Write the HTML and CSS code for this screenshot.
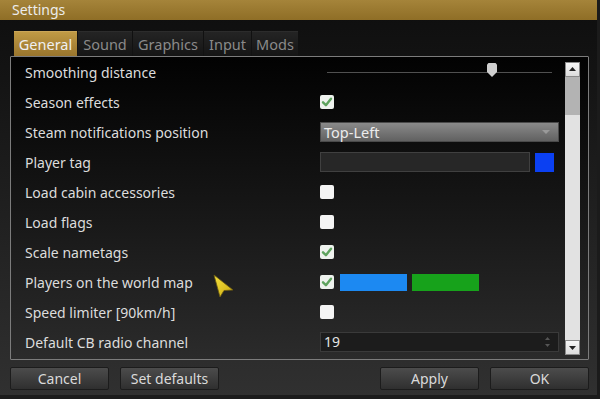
FILE: index.html
```html
<!DOCTYPE html>
<html>
<head>
<meta charset="utf-8">
<link rel="stylesheet" href="styles.css">
</head>
<body>
<div class="window">
  <div class="titlebar">Settings</div>
  <div class="tabs">
    <div class="tab active w-general">General</div>
    <div class="tab w-sound">Sound</div>
    <div class="tab w-graphics">Graphics</div>
    <div class="tab w-input">Input</div>
    <div class="tab w-mods">Mods</div>
  </div>
  <div class="panel">
    <div class="rows">
      <div class="row">
        <span class="label">Smoothing distance</span>
        <div class="slider">
          <div class="slider-line"></div>
          <svg class="slider-thumb" width="10" height="14" viewBox="0 0 10 14"><polygon points="1.5,0 8.5,0 10,1.5 10,9 5,14 0,9 0,1.5" fill="#cfcfcf"/></svg>
        </div>
      </div>
      <div class="row">
        <span class="label">Season effects</span>
        <div class="check on"><svg width="14" height="14" viewBox="0 0 14 14"><path d="M3 7.3 L5.9 10.2 L11 3.8" fill="none" stroke="#5ea35e" stroke-width="2.4" stroke-linejoin="round" stroke-linecap="round"/></svg></div>
      </div>
      <div class="row">
        <span class="label">Steam notifications position</span>
        <div class="dropdown"><span>Top-Left</span><span class="dd-arrow"></span></div>
      </div>
      <div class="row">
        <span class="label">Player tag</span>
        <div class="tagline"><div class="tag-input"></div><div class="swatch blue-sq"></div></div>
      </div>
      <div class="row">
        <span class="label">Load cabin accessories</span>
        <div class="check"></div>
      </div>
      <div class="row">
        <span class="label">Load flags</span>
        <div class="check"></div>
      </div>
      <div class="row">
        <span class="label">Scale nametags</span>
        <div class="check on"><svg width="14" height="14" viewBox="0 0 14 14"><path d="M3 7.3 L5.9 10.2 L11 3.8" fill="none" stroke="#5ea35e" stroke-width="2.4" stroke-linejoin="round" stroke-linecap="round"/></svg></div>
      </div>
      <div class="row">
        <span class="label">Players on the world map</span>
        <div class="mapline">
          <div class="check on"><svg width="14" height="14" viewBox="0 0 14 14"><path d="M3 7.3 L5.9 10.2 L11 3.8" fill="none" stroke="#5ea35e" stroke-width="2.4" stroke-linejoin="round" stroke-linecap="round"/></svg></div>
          <div class="bar bar-blue"></div>
          <div class="bar bar-green"></div>
        </div>
      </div>
      <div class="row">
        <span class="label">Speed limiter [90km/h]</span>
        <div class="check"></div>
      </div>
      <div class="row">
        <span class="label">Default CB radio channel</span>
        <div class="number"><span>19</span>
          <svg class="spin" width="7" height="14" viewBox="0 0 7 14"><polygon points="3.5,2 6,5 1,5" fill="#555"/><polygon points="1,9 6,9 3.5,12" fill="#555"/></svg>
        </div>
      </div>
    </div>
    <div class="scrollbar">
      <div class="sb-btn"><svg width="13" height="13" viewBox="0 0 13 13"><polygon points="6.5,4 10,8 3,8" fill="#222"/></svg></div>
      <div class="sb-thumb"></div>
      <div class="sb-track"></div>
      <div class="sb-btn"><svg width="13" height="13" viewBox="0 0 13 13"><polygon points="3,5 10,5 6.5,9" fill="#222"/></svg></div>
    </div>
  </div>
  <div class="buttons">
    <div class="btn">Cancel</div>
    <div class="btn">Set defaults</div>
    <div class="spacer"></div>
    <div class="btn">Apply</div>
    <div class="btn">OK</div>
  </div>
</div>
<svg class="cursor" width="22" height="24" viewBox="0 0 22 24">
  <defs>
    <linearGradient id="cg" x1="0" y1="0" x2="1" y2="1">
      <stop offset="0" stop-color="#f6e23e"/>
      <stop offset="1" stop-color="#c9a810"/>
    </linearGradient>
  </defs>
  <polygon points="1,1 20,16 11,16.5 7,23" fill="url(#cg)" stroke="#6b5a10" stroke-width="0.8"/>
</svg>
</body>
</html>
```

FILE: styles.css
```css
html, body {
  margin: 0;
  padding: 0;
}
body {
  width: 600px;
  height: 399px;
  overflow: hidden;
  background: #1b1b1b;
  font-family: "Noto Sans", "Open Sans", sans-serif;
  font-size: 14px;
  position: relative;
}
.window {
  width: 597px;
  height: 395px;
  display: flex;
  flex-direction: column;
  background: linear-gradient(#0e0e0e 0%, #141414 20%, #303030 100%);
}
.titlebar {
  height: 20px;
  line-height: 20px;
  padding-left: 12px;
  color: #ececec;
  background: linear-gradient(#a5843a, #8f6e26);
}
.tabs {
  display: flex;
  gap: 1px;
  margin-top: 11px;
  padding-left: 14px;
  height: 25px;
}
.tab {
  line-height: 24px;
  font-size: 14.5px;
  text-align: center;
  color: #8a8a8a;
  background: linear-gradient(#242424, #151515);
  border-top: 1px solid #2c2c2c;
  box-sizing: border-box;
}
.w-general { width: 63px; }
.w-sound { width: 54px; }
.w-graphics { width: 70px; }
.w-input { width: 47px; }
.w-mods { width: 46px; }
.tab.active {
  color: #f0f0f0;
  background: linear-gradient(#c09a45, #99752d);
  border-top: 1px solid #caa658;
}
.panel {
  margin: 0 8px 0 10px;
  height: 304px;
  box-sizing: border-box;
  border: 1px solid #7c7c7c;
  border-radius: 1px;
  display: flex;
  background: linear-gradient(#020202 0%, #0a0a0a 20%, #2b2b2b 100%);
}
.rows {
  flex: 1;
  padding-left: 14px;
  display: flex;
  flex-direction: column;
}
.row {
  height: 30px;
  display: grid;
  grid-template-columns: 295px 1fr;
  align-items: center;
}
.label {
  color: #dcdcdc;
  white-space: nowrap;
}
.slider {
  position: relative;
  height: 14px;
  display: flex;
  align-items: center;
}
.slider-line {
  margin-left: 7px;
  width: 225px;
  height: 1px;
  background: #505050;
}
.slider-thumb {
  position: absolute;
  left: 167px;
  top: -2px;
}
.check {
  width: 14px;
  height: 14px;
  border-radius: 2px;
  background: #f4f4f4;
}
.check svg {
  display: block;
}
.check.on {
  background: #eef2ee;
}
.dropdown {
  width: 239px;
  height: 20px;
  box-sizing: border-box;
  border: 1px solid #4a4a4a;
  background: linear-gradient(#8a8a8a, #616161);
  color: #ececec;
  display: flex;
  align-items: center;
  justify-content: space-between;
  padding: 0 8px 0 3px;
  line-height: 18px;
  font-size: 14.5px;
}
.dd-arrow {
  width: 0;
  height: 0;
  border-left: 4px solid transparent;
  border-right: 4px solid transparent;
  border-top: 4px solid #9a9a9a;
}
.tagline {
  display: flex;
  gap: 5px;
  align-items: center;
}
.tag-input {
  width: 210px;
  height: 20px;
  box-sizing: border-box;
  background: #272727;
  border: 1px solid #404040;
}
.swatch {
  width: 19px;
  height: 19px;
}
.blue-sq {
  background: #0b40f2;
}
.mapline {
  display: flex;
  align-items: center;
  gap: 6px;
}
.bar {
  width: 67px;
  height: 17px;
}
.bar-blue {
  background: #1c89f2;
}
.bar-green {
  margin-left: -1px;
  background: #17a21b;
}
.number {
  width: 239px;
  height: 20px;
  box-sizing: border-box;
  border: 1px solid #3a3a3a;
  background: #1c1c1c;
  color: #e4e4e4;
  display: flex;
  align-items: center;
  justify-content: space-between;
  padding: 0 7px 0 3px;
  line-height: 18px;
}
.spin {
  display: block;
}
.scrollbar {
  width: 15px;
  margin: 5px 8px 4px 0;
  display: flex;
  flex-direction: column;
}
.sb-btn {
  height: 15px;
  box-sizing: border-box;
  border: 1px solid #8a8a8a;
  background: linear-gradient(#f6f6f6, #dcdcdc);
  display: flex;
  align-items: center;
  justify-content: center;
}
.sb-btn svg {
  display: block;
}
.sb-thumb {
  height: 38px;
  background: #b3b3b3;
}
.sb-track {
  flex: 1;
  background: #e2e2e2;
}
.buttons {
  display: flex;
  gap: 11px;
  margin-top: 7px;
  padding: 0 8px 0 10px;
}
.spacer {
  flex: 1;
}
.btn {
  width: 99px;
  height: 23px;
  box-sizing: border-box;
  border: 1px solid #1c1c1c;
  border-radius: 2px;
  background: linear-gradient(#4c4c4c, #2f2f2f);
  color: #dadada;
  text-align: center;
  line-height: 21px;
}
.cursor {
  position: absolute;
  left: 213px;
  top: 274px;
}
```
